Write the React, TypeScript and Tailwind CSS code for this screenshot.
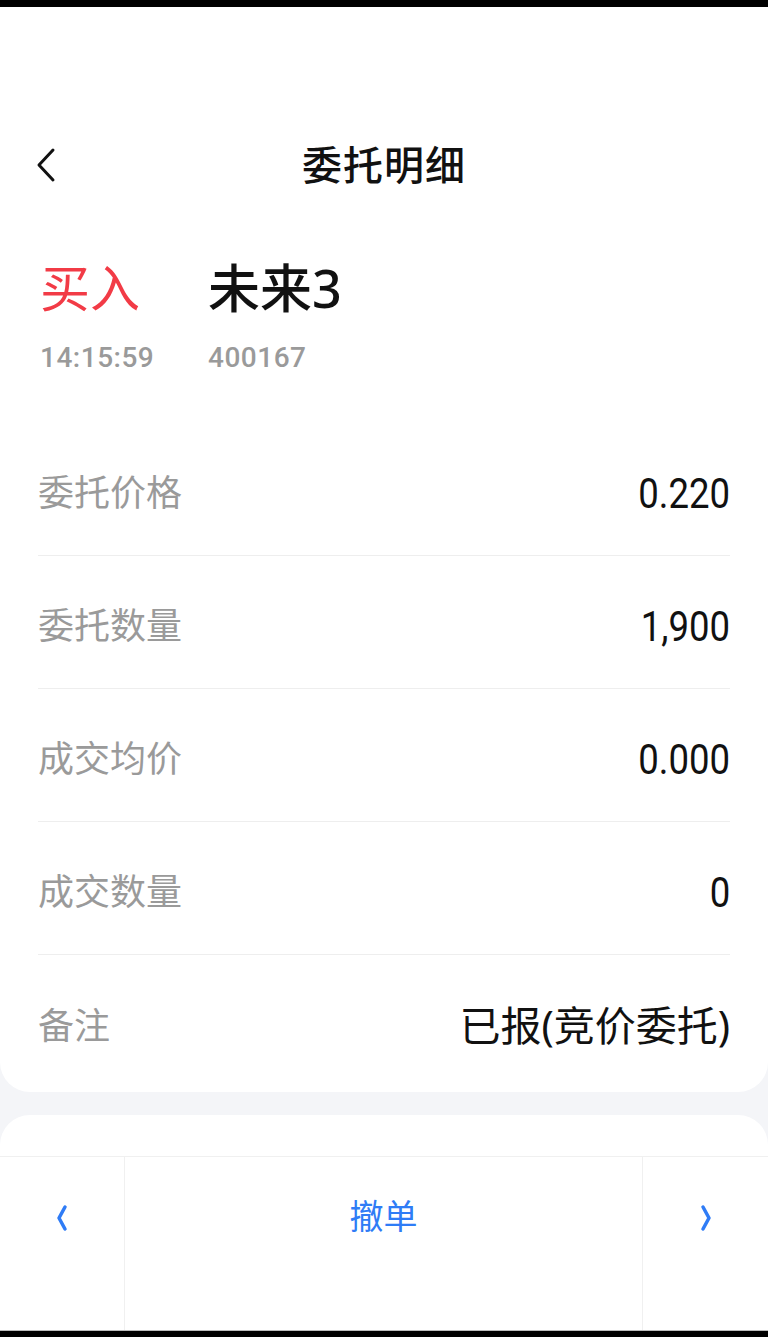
import React from "react";

const rows: { label: string; value: string; cjk?: boolean }[] = [
  { label: "委托价格", value: "0.220" },
  { label: "委托数量", value: "1,900" },
  { label: "成交均价", value: "0.000" },
  { label: "成交数量", value: "0" },
  { label: "备注", value: "已报(竞价委托)", cjk: true },
];

const font = { fontFamily: '"Noto Sans", "Noto Sans CJK SC", sans-serif' };
const roboto = { fontFamily: 'Roboto, "Noto Sans CJK SC", sans-serif' };

function Chevron({ dir }: { dir: "left" | "right" }) {
  return (
    <svg width="14" height="28" viewBox="0 0 14 28" fill="none" stroke="#2f7cf6" strokeWidth="3.5" strokeLinecap="round" strokeLinejoin="round">
      {dir === "left" ? <path d="M10 3 L4 14 L10 25" /> : <path d="M4 3 L10 14 L4 25" />}
    </svg>
  );
}

export default function App() {
  return (
    <div className="w-[768px] h-[1337px] bg-[#f4f5f8] flex flex-col overflow-hidden" style={font}>
      <div className="h-[7px] bg-black shrink-0" />
      <div className="bg-white rounded-b-[30px] h-[1085px] shrink-0 flex flex-col">
        <div className="h-[113px]" />
        <div className="h-[90px] relative flex items-center justify-center">
          <svg
            className="absolute left-[34px] top-[27px]"
            width="24"
            height="36"
            viewBox="0 0 24 36"
            fill="none"
            stroke="#111"
            strokeWidth="3"
            strokeLinecap="round"
            strokeLinejoin="round"
          >
            <path d="M19 3 L5 18 L19 33" />
          </svg>
          <span className="text-[40px] font-medium text-[#111] tracking-[1px]">委托明细</span>
        </div>
        <div className="h-[213px] px-[40px] pt-[46px] flex">
          <div className="w-[168px] flex flex-col">
            <span className="text-[50px] leading-[64px] text-[#f23b46]">买入</span>
            <span className="text-[28px] leading-[40px] mt-[18px] text-[#9a9a9a] font-medium tracking-[0.5px]" style={roboto}>
              14:15:59
            </span>
          </div>
          <div className="flex flex-col">
            <span className="text-[52px] leading-[64px] text-[#111] font-medium">未来3</span>
            <span className="text-[28px] leading-[40px] mt-[18px] text-[#9a9a9a] font-medium tracking-[0.5px]" style={roboto}>
              400167
            </span>
          </div>
        </div>
        <div className="px-[38px] flex flex-col">
          {rows.map((r, i) => (
            <div
              key={r.label}
              className={
                "h-[133px] pt-[8px] flex items-center justify-between " +
                (i < rows.length - 1 ? "border-b border-[#eeeeee]" : "")
              }
            >
              <span className="text-[36px] text-[#9a9a9a]">{r.label}</span>
              {r.cjk ? (
                <span className="text-[41px] text-[#111]">{r.value}</span>
              ) : (
                <span className="text-[43px] text-[#111] scale-x-[0.85] origin-right" style={roboto}>
                  {r.value}
                </span>
              )}
            </div>
          ))}
        </div>
      </div>
      <div className="h-[23px] shrink-0" />
      <div className="bg-white rounded-t-[30px] flex-1 flex flex-col">
        <div className="h-[42px] border-b border-[#f0f0f0]" />
        <div className="flex-1 flex">
          <div className="w-[125px] border-r border-[#f0f0f0] flex items-center justify-center pb-[52px]">
            <Chevron dir="left" />
          </div>
          <div className="flex-1 border-r border-[#f0f0f0] flex items-center justify-center pb-[54px]">
            <span className="text-[34px] text-[#2f7cf6]">撤单</span>
          </div>
          <div className="w-[125px] flex items-center justify-center pb-[52px]">
            <Chevron dir="right" />
          </div>
        </div>
      </div>
      <div className="h-[1px] bg-[#bbb] shrink-0" />
      <div className="h-[6px] bg-black shrink-0" />
    </div>
  );
}
